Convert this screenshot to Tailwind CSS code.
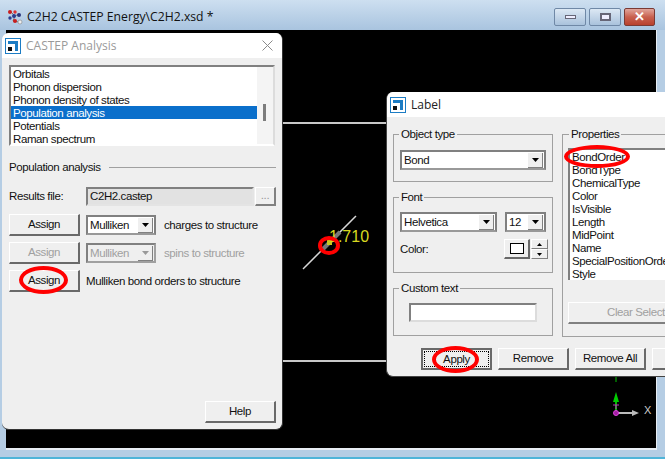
<!DOCTYPE html>
<html lang="en">
<head>
  <meta charset="UTF-8" />
  <title>C2H2 CASTEP Energy</title>
  <script src="https://cdn.jsdelivr.net/npm/@tailwindcss/browser@4"></script>
</head>
<body class="bg-black">
  <div class="relative w-[665px] h-[459px] overflow-hidden font-['Liberation_Sans',sans-serif] text-[11.5px] tracking-[-0.4px] leading-[13px] text-[#111]">

    <!-- main window -->
    <div class="flex flex-col w-[665px] h-[457px] pb-[7px] bg-[#b5cde4]">
      <div class="flex items-center h-[30px] shrink-0 pl-[7px] pr-[10px] pt-[3px] bg-gradient-to-b from-[#cddff0] to-[#a9c4df] tracking-normal">
        <svg width="16" height="16" viewBox="0 0 16 16" class="shrink-0">
          <path d="M4 3 L8 7 L12 5 M8 7 L6 12 L12 13" stroke="#777" stroke-width="1" fill="none" />
          <circle cx="3" cy="3" r="2" fill="#c81e1e" /><circle cx="8" cy="3" r="1.7" fill="#d33" />
          <circle cx="7" cy="7" r="2" fill="#2a3d8f" /><circle cx="12" cy="6" r="2" fill="#27357e" />
          <circle cx="3" cy="9" r="1.7" fill="#2a3d8f" /><circle cx="8" cy="12" r="2" fill="#c81e1e" />
          <circle cx="13" cy="13" r="2" fill="#eee" stroke="#777" stroke-width=".5" />
        </svg>
        <span class="ml-[4px] font-['Open_Sans',sans-serif] text-[12.2px] text-[#111]">C2H2 CASTEP Energy\C2H2.xsd *</span>
        <div class="ml-auto flex gap-[3px]">
          <div class="flex items-center justify-center w-[32px] h-[18px] rounded-[2px] border border-[#6f88a6] bg-gradient-to-b from-[#dce8f4] via-[#c3d5e8] to-[#a9c2dc]">
            <div class="w-[11px] h-[4px] bg-[#eef] border border-[#667]"></div>
          </div>
          <div class="flex items-center justify-center w-[32px] h-[18px] rounded-[2px] border border-[#6f88a6] bg-gradient-to-b from-[#dce8f4] via-[#c3d5e8] to-[#a9c2dc]">
            <div class="w-[11px] h-[8px] bg-[#eef] border-2 border-[#667]"></div>
          </div>
          <div class="flex items-center justify-center w-[31px] h-[18px] rounded-[2px] border border-[#7a3a34] bg-gradient-to-b from-[#e0a59c] via-[#c8604f] to-[#b8402c] text-white font-bold text-[13px]">✕</div>
        </div>
      </div>
      <div class="relative flex-1 ml-[6px] mr-[8px] bg-black border-b-[2px] border-r-[1px] border-[#e8eef4]">
        <!-- cell box lines -->
        <div class="absolute left-[270px] top-[92px] w-[110px] h-[2px] bg-[#c8c8c8]"></div>
        <div class="absolute left-[270px] top-[330px] w-[110px] h-[2px] bg-[#c8c8c8]"></div>
        <!-- molecule, bond label, axes -->
        <svg class="absolute left-0 top-0" width="651" height="420" viewBox="0 0 651 420">
          <line x1="297" y1="239" x2="350" y2="186" stroke="#d8d8d8" stroke-width="1.5" />
          <line x1="315" y1="221" x2="334" y2="202" stroke="#777" stroke-width="4" />
          <rect x="321" y="210" width="5" height="5" fill="#c8c820" />
          <line x1="610" y1="383" x2="628" y2="383" stroke="#bbb" stroke-width="2" />
          <path d="M626 380 L633 383 L626 386 Z" fill="#bbb" />
          <line x1="610" y1="383" x2="610" y2="369" stroke="#0b0" stroke-width="2" />
          <path d="M607 372 L610 362 L613 372 Z" fill="#0c0" />
          <line x1="610" y1="347" x2="610" y2="352" stroke="#0b0" stroke-width="1" />
          <circle cx="610" cy="383" r="2.5" fill="#a020a0" stroke="#e040e0" />
          <path d="M607 375 H613 M610 375 V379" stroke="#c030c0" fill="none" />
        </svg>
        <span class="absolute left-[323px] top-[199px] text-[16px] leading-[16px] tracking-normal text-[#d8d820]">1.710</span>
        <span class="absolute left-[638px] top-[374px] text-[11px] tracking-normal text-[#ccc]">X</span>
      </div>
    </div>
    <div class="h-[2px] bg-[#4fb4d8]"></div>

    <!-- CASTEP Analysis dialog -->
    <div class="absolute left-[2px] top-[33px] w-[281px] h-[397px] flex flex-col rounded-[7px] overflow-hidden border-r border-b border-[#333] bg-[#efefef]">
      <div class="flex items-center h-[25px] shrink-0 pl-[3px] pr-[9px] bg-white">
        <svg width="16" height="16" viewBox="0 0 16 16" class="shrink-0">
          <rect x=".5" y=".5" width="15" height="15" fill="#fff" stroke="#1c7cc4" />
          <path d="M3 3 H13 V13 H10 V6 H3 Z" fill="#1c7cc4" /><rect x="3" y="9" width="4" height="4" fill="#111" />
        </svg>
        <span class="ml-[5px] font-['Open_Sans',sans-serif] text-[12px] tracking-normal text-[#9a9a9a]">CASTEP Analysis</span>
        <span class="ml-auto text-[#8a8a8a]">
          <svg width="11" height="11" viewBox="0 0 11 11"><path d="M.5 .5 L10.5 10.5 M10.5 .5 L.5 10.5" stroke="#8a8a8a" /></svg>
        </span>
      </div>
      <div class="flex flex-col flex-1 pl-[7px] pr-[6px] pt-[7px] pb-[6px]">
        <div class="flex w-[266px] h-[81px] shrink-0 overflow-hidden border-2 border-t-[#808080] border-l-[#808080] border-r-[#dcdcdc] border-b-white bg-white">
          <div class="flex-1">
            <div class="h-[13px] px-[2px] pt-[1px]">Orbitals</div>
            <div class="h-[13px] px-[2px] pt-[1px]">Phonon dispersion</div>
            <div class="h-[13px] px-[2px] pt-[1px]">Phonon density of states</div>
            <div class="h-[13px] px-[2px] pt-[1px] bg-[#0a6fcb] text-white">Population analysis</div>
            <div class="h-[13px] px-[2px] pt-[1px]">Potentials</div>
            <div class="h-[13px] px-[2px] pt-[1px]">Raman spectrum</div>
          </div>
          <div class="relative w-[16px] shrink-0 bg-[#f4f4f4]">
            <div class="absolute left-[6px] top-[37px] w-[3px] h-[17px] bg-[#7d7d7d]"></div>
          </div>
        </div>
        <div class="flex items-center gap-[8px] mt-[15px] h-[13px]">
          <span>Population analysis</span><div class="flex-1 h-[1px] bg-[#a0a0a0]"></div>
        </div>
        <div class="flex items-center mt-[12px] h-[20px]">
          <span class="w-[77px]">Results file:</span>
          <div class="flex items-center w-[168px] h-[19px] pl-[2px] border-2 border-t-[#808080] border-l-[#808080] border-r-[#e4e4e4] border-b-[#e4e4e4] bg-[#e2e2e2]">C2H2.castep</div>
          <div class="ml-[1px] flex items-center justify-center w-[21px] h-[19px] border-t border-l border-white border-r-2 border-b-2 border-r-[#808080] border-b-[#808080] text-[#999]">...</div>
        </div>
        <div class="flex items-center mt-[8px] h-[22px]">
          <div class="flex items-center justify-center w-[71px] h-[22px] border-t border-l border-white border-r-2 border-b-2 border-r-[#696969] border-b-[#696969]">Assign</div>
          <div class="ml-[6px] flex items-center justify-between w-[70px] h-[20px] pl-[2px] pr-[1px] border-2 border-t-[#808080] border-l-[#808080] border-r-[#808080] border-b-[#999] bg-white">
            <span>Mulliken</span>
            <span class="flex items-center justify-center w-[15px] h-[15px] bg-[#efefef] border-r border-b border-[#808080]"><svg width="7" height="4" viewBox="0 0 7 4"><path d="M0 0 H7 L3.5 4 Z" fill="#000" /></svg></span>
          </div>
          <span class="ml-[8px]">charges to structure</span>
        </div>
        <div class="flex items-center mt-[6px] h-[22px] text-[#a0a0a0]">
          <div class="flex items-center justify-center w-[71px] h-[22px] border-t border-l border-white border-r-2 border-b-2 border-r-[#696969] border-b-[#696969]">Assign</div>
          <div class="ml-[6px] flex items-center justify-between w-[70px] h-[20px] pl-[2px] pr-[1px] border-2 border-t-[#808080] border-l-[#808080] border-r-[#a0a0a0] border-b-[#a0a0a0] bg-[#efefef]">
            <span>Mulliken</span>
            <span class="flex items-center justify-center w-[15px] h-[15px] border-r border-b border-[#808080]"><svg width="7" height="4" viewBox="0 0 7 4"><path d="M0 0 H7 L3.5 4 Z" fill="#999" /></svg></span>
          </div>
          <span class="ml-[8px]">spins to structure</span>
        </div>
        <div class="flex items-center mt-[6px] h-[22px]">
          <div class="flex items-center justify-center w-[71px] h-[22px] border-t border-l border-white border-r-2 border-b-2 border-r-[#696969] border-b-[#696969]">Assign</div>
          <span class="ml-[6px]">Mulliken bond orders to structure</span>
        </div>
        <div class="mt-auto ml-auto flex items-center justify-center w-[71px] h-[22px] border-t border-l border-white border-r-2 border-b-2 border-r-[#696969] border-b-[#696969]">Help</div>
      </div>
    </div>

    <!-- Label dialog -->
    <div class="absolute left-[386px] top-[92px] w-[290px] h-[285px] flex flex-col rounded-l-[7px] overflow-hidden border-b border-l border-[#444] bg-[#efefef]">
      <div class="flex items-center h-[25px] shrink-0 pl-[3px] bg-white">
        <svg width="16" height="16" viewBox="0 0 16 16" class="shrink-0">
          <rect x=".5" y=".5" width="15" height="15" fill="#fff" stroke="#1c7cc4" />
          <path d="M3 3 H13 V13 H10 V6 H3 Z" fill="#1c7cc4" /><rect x="3" y="9" width="4" height="4" fill="#111" />
        </svg>
        <span class="ml-[5px] font-['Open_Sans',sans-serif] text-[12px] tracking-normal text-[#222]">Label</span>
      </div>
      <div class="flex gap-[9px] pl-[6px] pt-[11px]">
        <div class="flex flex-col gap-[9px] w-[160px] shrink-0">
          <fieldset class="h-[54px] px-[6px] border border-[#a0a0a0]">
            <legend class="-ml-[1px] px-[2px]">Object type</legend>
            <div class="flex items-center justify-between h-[20px] mt-[9px] pl-[2px] pr-[1px] border-2 border-t-[#808080] border-l-[#808080] border-r-[#808080] border-b-[#999] bg-white">
              <span>Bond</span>
              <span class="flex items-center justify-center w-[15px] h-[15px] bg-[#efefef] border-r border-b border-[#808080]"><svg width="7" height="4" viewBox="0 0 7 4"><path d="M0 0 H7 L3.5 4 Z" fill="#000" /></svg></span>
            </div>
          </fieldset>
          <fieldset class="h-[82px] px-[6px] border border-[#a0a0a0]">
            <legend class="-ml-[1px] px-[2px]">Font</legend>
            <div class="flex justify-between mt-[8px]">
              <div class="flex items-center justify-between w-[97px] h-[20px] pl-[2px] pr-[1px] border-2 border-t-[#808080] border-l-[#808080] border-r-[#808080] border-b-[#999] bg-white">
                <span>Helvetica</span>
                <span class="flex items-center justify-center w-[15px] h-[15px] bg-[#efefef] border-r border-b border-[#808080]"><svg width="7" height="4" viewBox="0 0 7 4"><path d="M0 0 H7 L3.5 4 Z" fill="#000" /></svg></span>
              </div>
              <div class="flex items-center justify-between w-[41px] h-[20px] pl-[2px] pr-[1px] border-2 border-t-[#808080] border-l-[#808080] border-r-[#808080] border-b-[#999] bg-white">
                <span>12</span>
                <span class="flex items-center justify-center w-[15px] h-[15px] bg-[#efefef] border-r border-b border-[#808080]"><svg width="7" height="4" viewBox="0 0 7 4"><path d="M0 0 H7 L3.5 4 Z" fill="#000" /></svg></span>
              </div>
            </div>
            <div class="flex items-center mt-[7px] -mr-[2px]">
              <span>Color:</span>
              <div class="ml-auto flex items-center justify-center w-[26px] h-[20px] border-t border-l border-white border-r-2 border-b-2 border-r-[#696969] border-b-[#696969]">
                <div class="w-[14px] h-[11px] bg-white border border-black"></div>
              </div>
              <div class="ml-[1px] flex flex-col w-[17px] h-[20px]">
                <div class="flex items-center justify-center h-[10px] border-t border-l border-white border-r border-b border-r-[#808080] border-b-[#808080]"><svg width="5" height="3" viewBox="0 0 5 3"><path d="M0 3 H5 L2.5 0 Z" fill="#000" /></svg></div>
                <div class="flex items-center justify-center h-[10px] border-t border-l border-white border-r border-b border-r-[#808080] border-b-[#808080]"><svg width="5" height="3" viewBox="0 0 5 3"><path d="M0 0 H5 L2.5 3 Z" fill="#000" /></svg></div>
              </div>
            </div>
          </fieldset>
          <fieldset class="h-[54px] px-[15px] border border-[#a0a0a0]">
            <legend class="-ml-[10px] px-[2px]">Custom text</legend>
            <div class="h-[19px] mt-[8px] border-2 border-t-[#808080] border-l-[#808080] border-r-[#dcdcdc] border-b-[#dcdcdc] bg-white"></div>
          </fieldset>
        </div>
        <fieldset class="w-[120px] h-[209px] shrink-0 pl-[5px] border border-[#a0a0a0]">
          <legend class="ml-[1px] px-[2px]">Properties</legend>
          <div class="h-[132px] mt-[7px] pl-[2px] border-t-2 border-l-2 border-[#808080] bg-white whitespace-nowrap overflow-hidden">
            <div class="h-[13px] pt-[1px]">BondOrder</div>
            <div class="h-[13px] pt-[1px]">BondType</div>
            <div class="h-[13px] pt-[1px]">ChemicalType</div>
            <div class="h-[13px] pt-[1px]">Color</div>
            <div class="h-[13px] pt-[1px]">IsVisible</div>
            <div class="h-[13px] pt-[1px]">Length</div>
            <div class="h-[13px] pt-[1px]">MidPoint</div>
            <div class="h-[13px] pt-[1px]">Name</div>
            <div class="h-[13px] pt-[1px]">SpecialPositionOrder</div>
            <div class="h-[13px] pt-[1px]">Style</div>
          </div>
          <div class="flex items-center h-[22px] mt-[22px] pl-[38px] whitespace-nowrap overflow-hidden border-t border-l border-white border-b-2 border-b-[#808080] text-[#a0a0a0]">Clear Selection</div>
        </fieldset>
      </div>
      <div class="flex gap-[6px] mt-[11px] pl-[34px]">
        <div class="flex items-center justify-center w-[71px] h-[22px] shrink-0 border-2 border-[#696969] outline-1 outline-dotted -outline-offset-4 outline-black">Apply</div>
        <div class="flex items-center justify-center w-[71px] h-[22px] shrink-0 border-t border-l border-white border-r-2 border-b-2 border-r-[#696969] border-b-[#696969]">Remove</div>
        <div class="flex items-center justify-center w-[71px] h-[22px] shrink-0 border-t border-l border-white border-r-2 border-b-2 border-r-[#696969] border-b-[#696969]">Remove All</div>
        <div class="w-[71px] h-[22px] shrink-0 border-t border-l border-white border-b-2 border-b-[#696969]"></div>
      </div>
    </div>

    <!-- red annotation ellipses -->
    <div class="absolute left-[19px] top-[266px] w-[49px] h-[28px] rounded-[50%] border-[4px] border-[#f00]"></div>
    <div class="absolute left-[564px] top-[145px] w-[66px] h-[23px] rounded-[50%] border-[4px] border-[#f00]"></div>
    <div class="absolute left-[432px] top-[346px] w-[47px] h-[27px] rounded-[50%] border-[4px] border-[#f00]"></div>
    <div class="absolute left-[318px] top-[236px] w-[22px] h-[19px] rounded-[50%] border-[4px] border-[#f00]"></div>
  </div>
</body>
</html>
